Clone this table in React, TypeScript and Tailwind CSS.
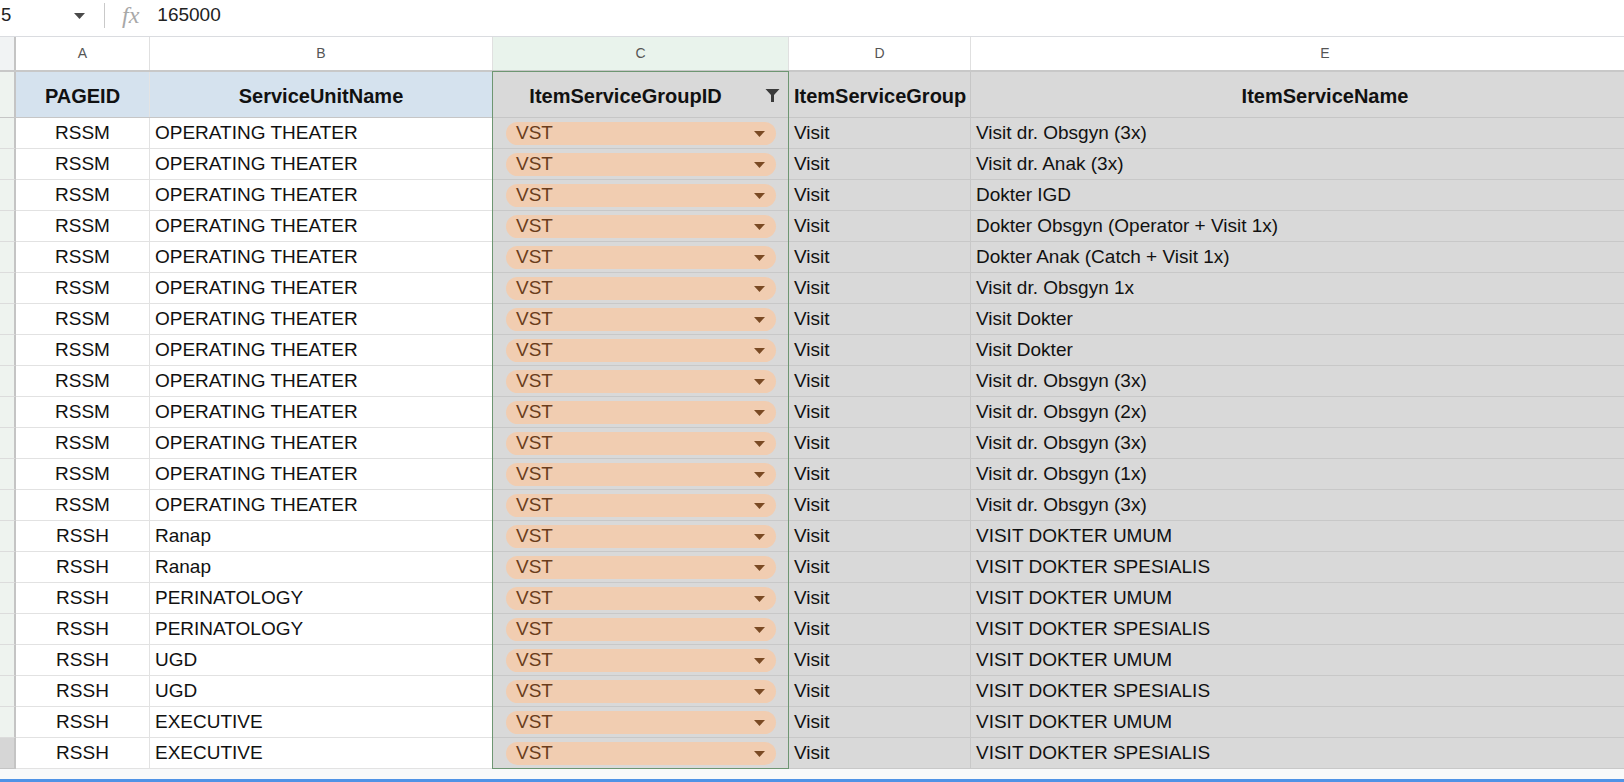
import React from "react";

const rows: [string, string, string][] = [
  ["RSSM", "OPERATING THEATER", "Visit dr. Obsgyn (3x)"],
  ["RSSM", "OPERATING THEATER", "Visit dr. Anak (3x)"],
  ["RSSM", "OPERATING THEATER", "Dokter IGD"],
  ["RSSM", "OPERATING THEATER", "Dokter Obsgyn (Operator + Visit 1x)"],
  ["RSSM", "OPERATING THEATER", "Dokter Anak (Catch + Visit 1x)"],
  ["RSSM", "OPERATING THEATER", "Visit dr. Obsgyn 1x"],
  ["RSSM", "OPERATING THEATER", "Visit Dokter"],
  ["RSSM", "OPERATING THEATER", "Visit Dokter"],
  ["RSSM", "OPERATING THEATER", "Visit dr. Obsgyn (3x)"],
  ["RSSM", "OPERATING THEATER", "Visit dr. Obsgyn (2x)"],
  ["RSSM", "OPERATING THEATER", "Visit dr. Obsgyn (3x)"],
  ["RSSM", "OPERATING THEATER", "Visit dr. Obsgyn (1x)"],
  ["RSSM", "OPERATING THEATER", "Visit dr. Obsgyn (3x)"],
  ["RSSH", "Ranap", "VISIT DOKTER UMUM"],
  ["RSSH", "Ranap", "VISIT DOKTER SPESIALIS"],
  ["RSSH", "PERINATOLOGY", "VISIT DOKTER UMUM"],
  ["RSSH", "PERINATOLOGY", "VISIT DOKTER SPESIALIS"],
  ["RSSH", "UGD", "VISIT DOKTER UMUM"],
  ["RSSH", "UGD", "VISIT DOKTER SPESIALIS"],
  ["RSSH", "EXECUTIVE", "VISIT DOKTER UMUM"],
  ["RSSH", "EXECUTIVE", "VISIT DOKTER SPESIALIS"],
];

function Caret({ color }: { color: string }) {
  return (
    <svg width="11" height="6" viewBox="0 0 11 6">
      <path d="M0 0 L11 0 L5.5 6 Z" fill={color} />
    </svg>
  );
}

function Funnel() {
  return (
    <svg width="15" height="15" viewBox="0 0 15 15">
      <path d="M0.5 1 H14.5 L9 7 V14 H6 V7 Z" fill="#3a3a3a" />
    </svg>
  );
}

export default function App() {
  return (
    <div className="relative w-[1624px] h-[782px] overflow-hidden bg-white font-['Liberation_Sans',_Arial,_sans-serif] text-[#111]">
      {/* Formula bar */}
      <div className="h-[37px] border-b border-[#dadce0] bg-white">
        <div className="flex items-center h-[30px]">
          <div className="w-[104px] shrink-0 flex items-center h-full">
            <span className="pl-[1px] text-[18.5px] text-[#222]">5</span>
            <span className="ml-[63px] mt-[1px]">
              <Caret color="#4a4a4a" />
            </span>
          </div>
          <div className="w-px h-[25px] bg-[#c9c9c9]" />
          <span className="ml-[17px] font-['Liberation_Serif',_serif] italic text-[24px] text-[#a8a8a8] leading-none">
            fx
          </span>
          <span className="ml-[18px] text-[19px] text-[#222]">165000</span>
        </div>
      </div>

      {/* Column letters */}
      <div className="flex h-[35px] border-b-2 border-[#c8c8c8] text-[14px] text-[#555]">
        <div className="w-[16px] shrink-0 bg-[#f1f3f4] border-r-2 border-[#c4c4c4]" />
        <div className="w-[134px] shrink-0 flex items-center justify-center border-r border-[#e0e0e0]">A</div>
        <div className="w-[343px] shrink-0 flex items-center justify-center border-r border-[#e0e0e0]">B</div>
        <div className="w-[296px] shrink-0 flex items-center justify-center bg-[#e9f3ec] border-r border-[#e0e0e0]">C</div>
        <div className="w-[182px] shrink-0 flex items-center justify-center border-r border-[#e0e0e0]">D</div>
        <div className="w-[708px] shrink-0 flex items-center justify-center">E</div>
      </div>

      {/* Header row */}
      <div className="flex h-[46px] border-b border-[#c6c6c6] text-[20px] font-bold">
        <div className="w-[16px] shrink-0 bg-[#eef3ef] border-r-2 border-[#c4c4c4]" />
        <div className="w-[134px] shrink-0 flex items-center justify-center pt-[2px] bg-[#d5e2ee] border-r border-[#e3e3e3]">PAGEID</div>
        <div className="w-[343px] shrink-0 flex items-center justify-center pt-[2px] bg-[#d5e2ee] border-r border-[#e3e3e3]">ServiceUnitName</div>
        <div className="w-[296px] shrink-0 flex items-center pt-[2px] bg-[#d9d9d9] border-r border-[#c6c6c6]">
          <span className="flex-1 text-center pr-[7px] whitespace-nowrap">ItemServiceGroupID</span>
          <span className="pr-[8px]">
            <Funnel />
          </span>
        </div>
        <div className="w-[182px] shrink-0 flex items-center pt-[2px] pl-[5px] bg-[#d9d9d9] border-r border-[#c6c6c6] whitespace-nowrap overflow-hidden">
          ItemServiceGroup
        </div>
        <div className="w-[708px] shrink-0 flex items-center justify-center pt-[2px] bg-[#d9d9d9]">ItemServiceName</div>
      </div>

      {/* Data rows */}
      {rows.map(([a, b, e], i) => {
        const last = i === rows.length - 1;
        return (
          <div key={i} className="flex h-[31px] text-[19px]">
            <div
              className={
                last
                  ? "w-[16px] shrink-0 bg-[#d6d6d6] border-r-2 border-b border-[#c4c4c4]"
                  : "w-[16px] shrink-0 bg-[#eef3ef] border-r-2 border-r-[#c4c4c4] border-b border-b-[#dcdcdc]"
              }
            />
            <div className="w-[134px] shrink-0 flex items-center justify-center pt-[1px] border-r border-b border-[#e2e2e2]">
              {a}
            </div>
            <div className="w-[343px] shrink-0 flex items-center pl-[5px] pt-[1px] border-r border-b border-[#e2e2e2] whitespace-nowrap">
              {b}
            </div>
            <div className="w-[296px] shrink-0 flex items-center px-[13px] bg-[#d9d9d9] border-b border-[#c8c8c8]">
              <div className="flex-1 h-[23px] rounded-full bg-[#f1cdb1] flex items-center pl-[10px] pr-[11px] pt-[1px] text-[#6a3d1c]">
                <span className="flex-1">VST</span>
                <Caret color="#7a4a24" />
              </div>
            </div>
            <div className="w-[182px] shrink-0 flex items-center pl-[5px] pt-[1px] bg-[#d9d9d9] border-r border-b border-[#c8c8c8]">
              Visit
            </div>
            <div className="w-[708px] shrink-0 flex items-center pl-[5px] pt-[1px] bg-[#d9d9d9] border-b border-[#c8c8c8] whitespace-nowrap">
              {e}
            </div>
          </div>
        );
      })}

      {/* Bottom filler */}
      <div className="h-[10px] bg-[#f8f9fa]" />
      <div className="h-[3px] bg-[#4f93e6]" />

      {/* Selection outline over column C */}
      <div className="absolute left-[492px] top-[71px] w-[297px] h-[698px] border border-[#6e9672] pointer-events-none" />
    </div>
  );
}
